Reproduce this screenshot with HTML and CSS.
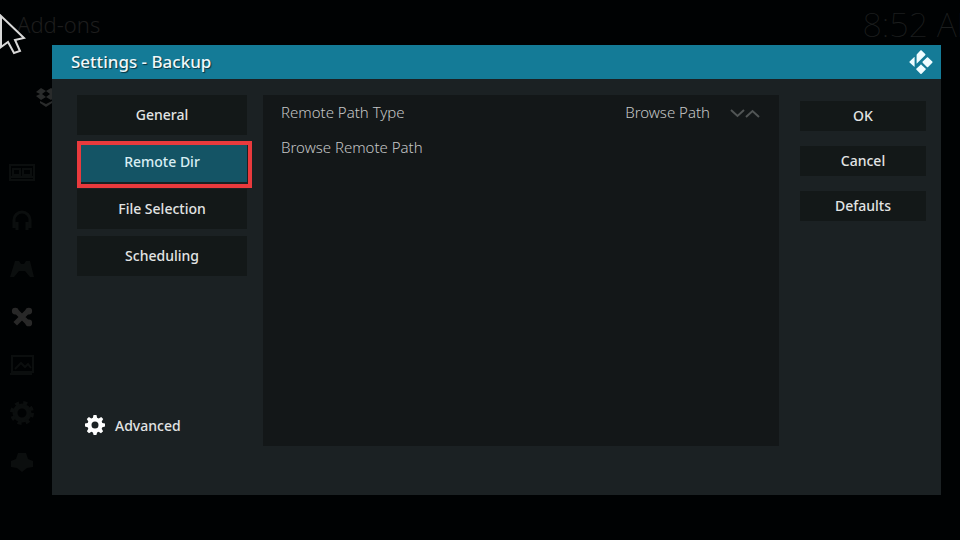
FILE: index.html
```html
<!DOCTYPE html>
<html lang="en">
<head>
    <meta charset="UTF-8">
    <meta name="viewport" content="width=device-width, initial-scale=1.0">
    <title>Settings - Backup</title>
    <link rel="stylesheet" href="styles.css">
</head>
<body>
    <div class="home">
        <div class="home-header">
            <span class="home-title">Add-ons</span>
            <span class="clock">8:52 AM</span>
        </div>
        <div class="home-menu">
            <svg class="menu-icon" viewBox="0 0 26 26"><path d="M1 5h24v15H1zM1 17h24M4 9h7v6H4zM14 9h8v6h-8z" fill="none" stroke="currentColor" stroke-width="2"/></svg>
            <svg class="menu-icon" viewBox="0 0 26 26"><path d="M5 20v-8a8 8 0 0 1 16 0v8M8 14v8M18 14v8" fill="none" stroke="currentColor" stroke-width="3"/></svg>
            <svg class="menu-icon" viewBox="0 0 26 26"><path d="M6 5h4l2 3h3l2-3h4l4 16h-4l-5-6h-6l-5 6H1z" fill="currentColor"/></svg>
            <svg class="menu-icon active" viewBox="0 0 26 26"><path d="M5 5l16 16M21 5L5 21" stroke="currentColor" stroke-width="6"/><circle cx="5" cy="6" r="4" fill="currentColor"/><circle cx="21" cy="6" r="4" fill="currentColor"/><circle cx="21" cy="20" r="4" fill="currentColor"/></svg>
            <svg class="menu-icon" viewBox="0 0 26 26"><path d="M3 4h21v16H3zM1 22h22M6 17l6-6 4 4 3-3 3 4" fill="none" stroke="currentColor" stroke-width="2"/></svg>
            <svg class="menu-icon" viewBox="0 0 26 26"><circle cx="13" cy="13" r="7" fill="none" stroke="currentColor" stroke-width="5"/><circle cx="13" cy="13" r="10" fill="none" stroke="currentColor" stroke-width="4" stroke-dasharray="4 4"/></svg>
            <svg class="menu-icon" viewBox="0 0 26 26"><path d="M2 13l5-2 2-6h8l2 6 5 2v6l-6 1-5 4-5-4-6-1z" fill="currentColor"/></svg>
        </div>
        <svg class="box-icon" viewBox="0 0 20 20"><path d="M5 1l5 3-4 3 4 3-5 3-5-4 4-2-4-2zM15 1l5 3-4 3 4 2-5 4-5-3 4-3-4-3zM4 14l6 3 6-3v2l-6 4-6-4z" fill="currentColor"/></svg>
    </div>

    <div class="dialog" role="dialog" aria-labelledby="dialogTitle">
        <div class="dialog-header">
            <h1 id="dialogTitle">Settings - Backup</h1>
            <svg class="logo" viewBox="0 0 24 24" aria-hidden="true">
                <path d="M12.600.400l3.600 3.600c.4.4.4.8 0 1.200l-8.600 8.600V5.200c0-.5.1-.8.5-1.100L11.400.400c.4-.3.8-.3 1.200 0z"/>
                <path d="M5 7.200c.3-.3.600-.2.600.2v9c0 .4-.3.500-.600.200L.6 12.600c-.4-.4-.4-.8 0-1.200z"/>
                <path d="M17.900 7.500c.4-.4.800-.4 1.200 0l4.200 4c.4.4.4.8 0 1.200l-4.200 4.200c-.4.4-.8.4-1.200 0l-4.200-4.200c-.4-.4-.4-.8 0-1.200z"/>
                <path d="M11.400 14.900c.4-.4.800-.4 1.200 0l3.900 3.700c.4.4.4.8 0 1.200l-3.900 3.900c-.4.4-.8.4-1.200 0l-3.900-3.900c-.4-.4-.4-.8 0-1.200z"/>
            </svg>
        </div>
        <div class="dialog-body">
            <div class="sidebar">
                <button type="button" class="btn tab">General</button>
                <button type="button" class="btn tab selected">Remote Dir</button>
                <button type="button" class="btn tab">File Selection</button>
                <button type="button" class="btn tab">Scheduling</button>
                <button type="button" class="level">
                    <svg class="gear" viewBox="0 0 20 20" aria-hidden="true">
                        <path fill-rule="evenodd" d="M8.500 0h3l.6 2.700 1.600.7L16.200 1.900l2 2.100-1.500 2.500.6 1.400 2.700.7v3l-2.700.7-.6 1.500 1.400 2.400-2.100 2-2.400-1.400-1.500.6L11.400 20H8.600l-.7-2.600-1.500-.6L4 18.200l-2.100-2 1.400-2.400-.6-1.500L0 11.600v-3l2.700-.7.6-1.400L1.800 4l2.100-2.100 2.400 1.500 1.600-.7zM10 6.500a3.500 3.500 0 1 0 0 7 3.500 3.500 0 0 0 0-7z"/>
                    </svg>
                    Advanced
                </button>
            </div>
            <div class="panel">
                <div class="setting">
                    <span>Remote Path Type</span>
                    <span class="value">Browse Path</span>
                    <div class="spinner">
                        <button type="button" aria-label="Next"><svg viewBox="0 0 15 9"><path d="M1 1l6.500 6L14 1"/></svg></button>
                        <button type="button" aria-label="Previous"><svg viewBox="0 0 15 9"><path d="M1 8l6.500-6L14 8"/></svg></button>
                    </div>
                </div>
                <button type="button" class="setting">Browse Remote Path</button>
            </div>
            <div class="actions">
                <button type="button" class="btn">OK</button>
                <button type="button" class="btn">Cancel</button>
                <button type="button" class="btn">Defaults</button>
            </div>
        </div>
    </div>

    <svg class="cursor" viewBox="0 0 26 42" aria-hidden="true"><path d="M1 2v31l7-5 6 11 6-2-5-11 9-2z"/></svg>
</body>
</html>
```

FILE: styles.css
```css
* {
    margin: 0;
    padding: 0;
    box-sizing: border-box;
}

body {
    font-family: 'Noto Sans', 'Open Sans', sans-serif;
    background: #000203;
    height: 100vh;
    overflow: hidden;
    position: relative;
}

button {
    font-family: inherit;
    border: none;
    background: none;
    cursor: pointer;
}

/* dimmed home screen */
.home {
    height: 100%;
    overflow: hidden;
    color: #0b0e0e;
}

.home-header {
    display: flex;
    justify-content: space-between;
    height: 48px;
    padding-left: 17px;
    line-height: 48px;
    white-space: nowrap;
}

.home-title {
    font-size: 22px;
    font-weight: 300;
    color: #1d1d1d;
}

/* runs off the right edge */
.clock {
    margin-right: -25px;
    font-size: 34px;
    font-weight: 100;
    color: #1c1e1e;
}

.home-menu {
    display: flex;
    flex-direction: column;
    gap: 22px;
    padding: 112px 9px 0;
}

.menu-icon {
    width: 26px;
    height: 26px;
}

.menu-icon.active {
    padding: 2px;
    color: #282828;
}

.box-icon {
    position: absolute;
    left: 36px;
    top: 87px;
    width: 20px;
    height: 20px;
    color: #292b2b;
}

.dialog {
    position: absolute;
    inset: 45px 19px 45px 52px;
    display: flex;
    flex-direction: column;
    background: #1b2123;
}

.dialog-header {
    display: flex;
    align-items: center;
    justify-content: space-between;
    height: 34px;
    padding: 0 8px 0 19px;
    background: #147b97;
}

.dialog-header h1 {
    padding-bottom: 2px;
    font-size: 17px;
    font-weight: 500;
    color: #f0f8fa;
    text-shadow: 1px 1px 1px rgba(0, 0, 0, 0.6);
}

.logo {
    width: 24px;
    height: 24px;
    fill: #effcff;
}

.dialog-body {
    flex: 1;
    display: grid;
    grid-template-columns: 170px 1fr 126px;
    padding: 16px 15px 49px 25px;
}

.sidebar {
    display: flex;
    flex-direction: column;
    gap: 7px;
}

.btn {
    height: 30px;
    padding-bottom: 2px;
    background: #131818;
    color: #e2e4e4;
    font-size: 14px;
    font-weight: 500;
}

.tab {
    position: relative;
    height: 40px;
}

.tab.selected {
    background: #145465;
    color: #d8eef3;
}

.tab.selected::after {
    content: '';
    position: absolute;
    inset: -1px -5px -6px 0;
    border: 4px solid #e93a3d;
}

.level {
    display: flex;
    align-items: center;
    gap: 10px;
    height: 40px;
    margin-top: auto;
    padding: 0 0 2px 8px;
    font-size: 14px;
    font-weight: 500;
    color: #e2e4e4;
}

.gear {
    width: 20px;
    height: 20px;
    fill: #ffffff;
}

.panel {
    margin: 0 21px 0 16px;
    background: #131718;
}

.setting {
    display: flex;
    align-items: center;
    width: 100%;
    height: 35px;
    padding: 0 19px 2px 18px;
    font-size: 15px;
    font-weight: 300;
    color: #c4c6c6;
}

.value {
    margin-left: auto;
}

.spinner {
    display: flex;
    margin-left: 20px;
    padding-top: 3px;
}

.spinner svg {
    display: block;
    width: 15px;
    height: 9px;
    fill: none;
    stroke: #515555;
    stroke-width: 2;
}

.actions {
    display: flex;
    flex-direction: column;
    gap: 15px;
    padding-top: 6px;
}

.cursor {
    position: absolute;
    left: 0;
    top: 14px;
    width: 26px;
    height: 42px;
    fill: #000203;
    stroke: #d8d8d8;
    stroke-width: 2;
}
```
